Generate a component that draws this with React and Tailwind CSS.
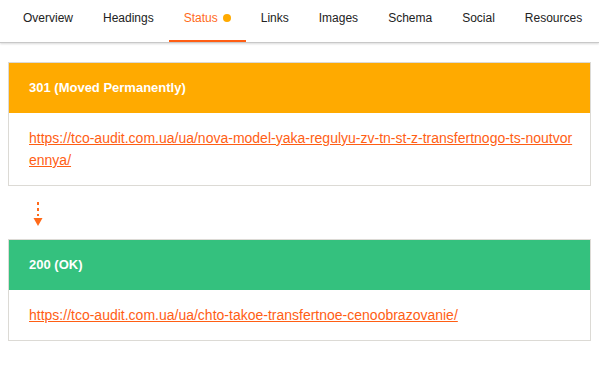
import { useState } from 'react';

const tabs = ['Overview', 'Headings', 'Status', 'Links', 'Images', 'Schema', 'Social', 'Resources'];

const hops = [
  {
    code: '301 (Moved Permanently)',
    color: 'bg-[#ffaa00]',
    url: 'https://tco-audit.com.ua/ua/nova-model-yaka-regulyu-zv-tn-st-z-transfertnogo-ts-noutvorennya/',
  },
  {
    code: '200 (OK)',
    color: 'bg-[#34c17e]',
    url: 'https://tco-audit.com.ua/ua/chto-takoe-transfertnoe-cenoobrazovanie/',
  },
];

function HopCard({ hop }) {
  return (
    <div className="border border-[#dcdad5] bg-white">
      <div className={`${hop.color} h-[50px] flex items-center px-5 text-white font-bold text-[13px]`}>
        {hop.code}
      </div>
      <div className="pl-5 pr-4 py-[14px] text-[14px] leading-[22px]">
        <a href="#" className="text-[#ff5e14] underline break-all">
          {hop.url}
        </a>
      </div>
    </div>
  );
}

export default function App() {
  const [active, setActive] = useState('Status');

  return (
    <div className="min-h-screen bg-white font-['Liberation_Sans',Arial,sans-serif]">
      {/* Tabs */}
      <div className="flex px-2 h-[43px] border-b border-[#c8c8c8] shadow-[0_1px_2px_rgba(0,0,0,0.15)]">
        {tabs.map((t) => (
          <button
            key={t}
            onClick={() => setActive(t)}
            className={`px-[15px] pb-1 h-full flex items-center gap-[5px] text-[12px] border-b-2 ${
              active === t ? 'text-[#ff6a1a] border-[#ff5e14]' : 'text-[#222] border-transparent'
            }`}
          >
            {t}
            {t === 'Status' && <span className="w-2 h-2 rounded-full bg-[#ffaa00]" />}
          </button>
        ))}
      </div>

      {/* Redirect chain */}
      <div className="px-2 pt-[19px]">
        <HopCard hop={hops[0]} />
        <div className="h-[53px] pl-[18px] flex items-center">
          <svg width="24" height="30" viewBox="0 0 24 30">
            <line x1="12" y1="4" x2="12" y2="18" stroke="#ff6a1a" strokeWidth="2" strokeDasharray="3 3" />
            <polygon points="7.5,20 16.5,20 12,28" fill="#ff6a1a" />
          </svg>
        </div>
        <HopCard hop={hops[1]} />
      </div>
    </div>
  );
}
